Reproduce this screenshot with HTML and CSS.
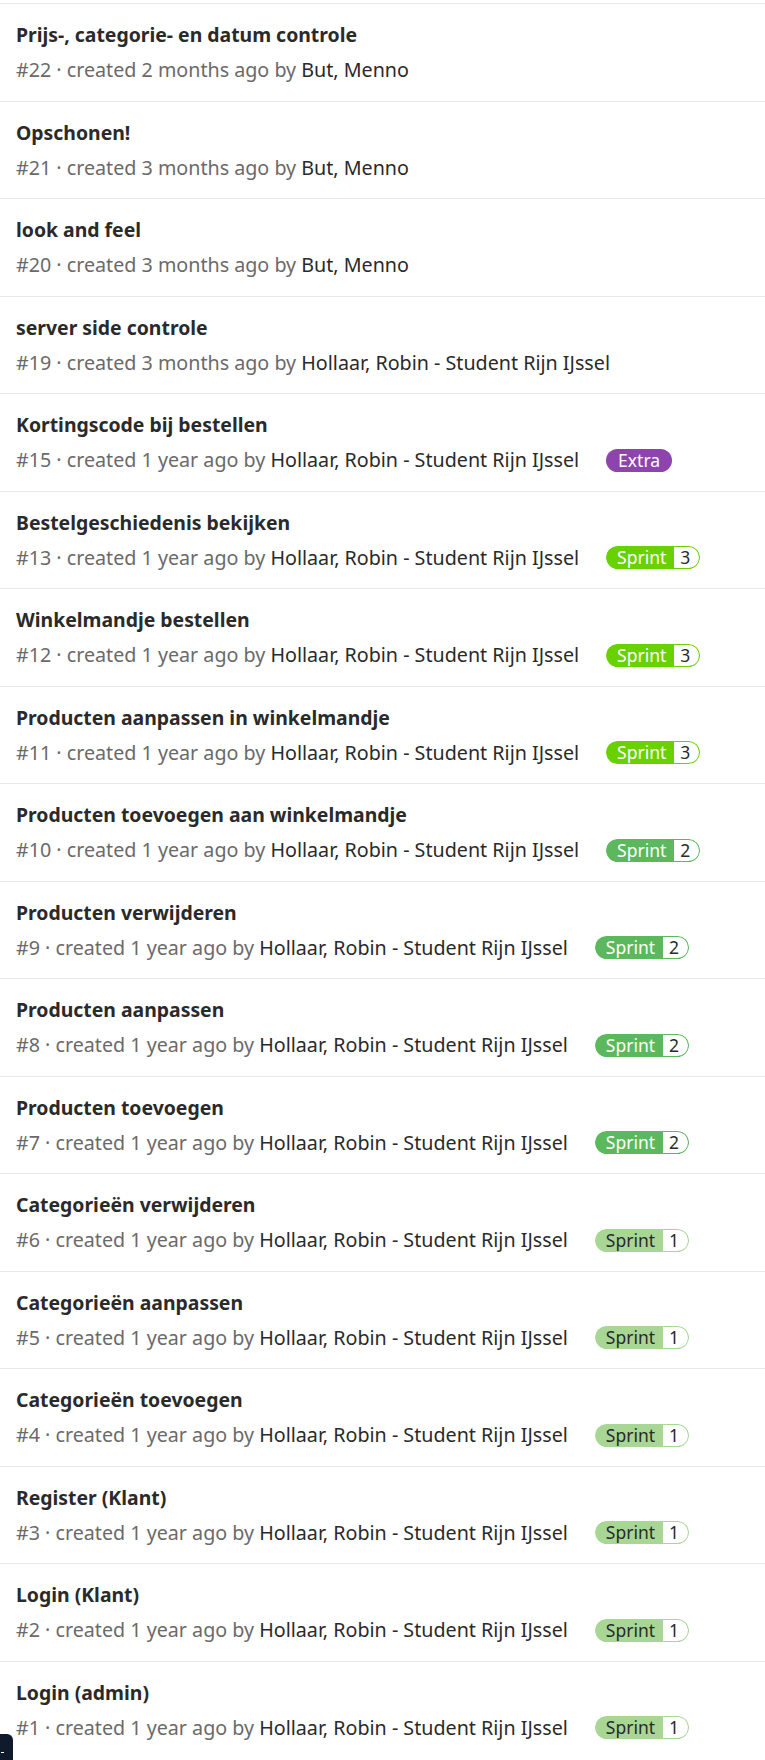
FILE: index.html
```html
<!DOCTYPE html>
<html lang="nl">
<head>
<meta charset="utf-8">
<title>Issues</title>
<link rel="stylesheet" href="styles.css">
</head>
<body>
<ul class="issues">
  <li class="issue"><div class="title">Prijs-, categorie- en datum controle</div><div class="meta"><span class="info">#22 · created 2 months ago by <span class="author">But, Menno</span></span></div></li>
  <li class="issue"><div class="title">Opschonen!</div><div class="meta"><span class="info">#21 · created 3 months ago by <span class="author">But, Menno</span></span></div></li>
  <li class="issue"><div class="title">look and feel</div><div class="meta"><span class="info">#20 · created 3 months ago by <span class="author">But, Menno</span></span></div></li>
  <li class="issue"><div class="title">server side controle</div><div class="meta"><span class="info">#19 · created 3 months ago by <span class="author">Hollaar, Robin - Student Rijn IJssel</span></span></div></li>
  <li class="issue"><div class="title">Kortingscode bij bestellen</div><div class="meta"><span class="info">#15 · created 1 year ago by <span class="author">Hollaar, Robin - Student Rijn IJssel</span></span><span class="label label-extra">Extra</span></div></li>
  <li class="issue"><div class="title">Bestelgeschiedenis bekijken</div><div class="meta"><span class="info">#13 · created 1 year ago by <span class="author">Hollaar, Robin - Student Rijn IJssel</span></span><span class="scoped s3"><span class="key">Sprint</span><span class="val">3</span></span></div></li>
  <li class="issue"><div class="title">Winkelmandje bestellen</div><div class="meta"><span class="info">#12 · created 1 year ago by <span class="author">Hollaar, Robin - Student Rijn IJssel</span></span><span class="scoped s3"><span class="key">Sprint</span><span class="val">3</span></span></div></li>
  <li class="issue"><div class="title">Producten aanpassen in winkelmandje</div><div class="meta"><span class="info">#11 · created 1 year ago by <span class="author">Hollaar, Robin - Student Rijn IJssel</span></span><span class="scoped s3"><span class="key">Sprint</span><span class="val">3</span></span></div></li>
  <li class="issue"><div class="title">Producten toevoegen aan winkelmandje</div><div class="meta"><span class="info">#10 · created 1 year ago by <span class="author">Hollaar, Robin - Student Rijn IJssel</span></span><span class="scoped s2"><span class="key">Sprint</span><span class="val">2</span></span></div></li>
  <li class="issue"><div class="title">Producten verwijderen</div><div class="meta"><span class="info">#9 · created 1 year ago by <span class="author">Hollaar, Robin - Student Rijn IJssel</span></span><span class="scoped s2"><span class="key">Sprint</span><span class="val">2</span></span></div></li>
  <li class="issue"><div class="title">Producten aanpassen</div><div class="meta"><span class="info">#8 · created 1 year ago by <span class="author">Hollaar, Robin - Student Rijn IJssel</span></span><span class="scoped s2"><span class="key">Sprint</span><span class="val">2</span></span></div></li>
  <li class="issue"><div class="title">Producten toevoegen</div><div class="meta"><span class="info">#7 · created 1 year ago by <span class="author">Hollaar, Robin - Student Rijn IJssel</span></span><span class="scoped s2"><span class="key">Sprint</span><span class="val">2</span></span></div></li>
  <li class="issue"><div class="title">Categorieën verwijderen</div><div class="meta"><span class="info">#6 · created 1 year ago by <span class="author">Hollaar, Robin - Student Rijn IJssel</span></span><span class="scoped s1"><span class="key">Sprint</span><span class="val">1</span></span></div></li>
  <li class="issue"><div class="title">Categorieën aanpassen</div><div class="meta"><span class="info">#5 · created 1 year ago by <span class="author">Hollaar, Robin - Student Rijn IJssel</span></span><span class="scoped s1"><span class="key">Sprint</span><span class="val">1</span></span></div></li>
  <li class="issue"><div class="title">Categorieën toevoegen</div><div class="meta"><span class="info">#4 · created 1 year ago by <span class="author">Hollaar, Robin - Student Rijn IJssel</span></span><span class="scoped s1"><span class="key">Sprint</span><span class="val">1</span></span></div></li>
  <li class="issue"><div class="title">Register (Klant)</div><div class="meta"><span class="info">#3 · created 1 year ago by <span class="author">Hollaar, Robin - Student Rijn IJssel</span></span><span class="scoped s1"><span class="key">Sprint</span><span class="val">1</span></span></div></li>
  <li class="issue"><div class="title">Login (Klant)</div><div class="meta"><span class="info">#2 · created 1 year ago by <span class="author">Hollaar, Robin - Student Rijn IJssel</span></span><span class="scoped s1"><span class="key">Sprint</span><span class="val">1</span></span></div></li>
  <li class="issue"><div class="title">Login (admin)</div><div class="meta"><span class="info">#1 · created 1 year ago by <span class="author">Hollaar, Robin - Student Rijn IJssel</span></span><span class="scoped s1"><span class="key">Sprint</span><span class="val">1</span></span></div></li>
</ul>
<div class="corner-btn"><span class="corner-mark"></span></div>
</body>
</html>
```
FILE: styles.css
```css
html, body {
  margin: 0;
  padding: 0;
  background: #ffffff;
}
body {
  font-family: "Noto Sans", "DejaVu Sans", sans-serif;
  color: #303030;
  overflow: hidden;
}
.issues {
  list-style: none;
  margin: 0;
  padding: 3px 0 0;
}
.issue {
  border-top: 1px solid #e9e9e9;
  padding: 19px 16px 18.5px;
  display: flex;
  flex-direction: column;
  gap: 11px;
}
.title {
  font-size: 19.4px;
  font-weight: 700;
  line-height: 24px;
  color: #2a2a2a;
  white-space: nowrap;
}
.meta {
  display: flex;
  align-items: center;
  gap: 27px;
  height: 24px;
  white-space: nowrap;
}
.info {
  font-size: 19.7px;
  line-height: 24px;
  color: #6a6a6a;
}
.author {
  color: #2a2a2a;
}
.label {
  display: inline-flex;
  align-items: center;
  height: 23px;
  padding: 0 12px;
  border-radius: 12px;
  font-size: 17.5px;
  line-height: 23px;
}
.label-extra {
  background: #8e44ad;
  color: #ffffff;
}
.scoped {
  display: inline-flex;
  height: 23px;
  font-size: 17.5px;
  line-height: 21px;
  border-radius: 12px;
  overflow: hidden;
}
.scoped .key {
  padding: 1px 8px 1px 11px;
  border-radius: 12px 0 0 12px;
}
.scoped .val {
  padding: 0 9px 0 6px;
  background: #ffffff;
  color: #2a2a2a;
  border-width: 1px 1px 1px 0;
  border-style: solid;
  border-radius: 0 12px 12px 0;
}
.s3 .key { background: #69d100; color: #ffffff; }
.s3 .val { border-color: #69d100; }
.s2 .key { background: #5cb85c; color: #ffffff; }
.s2 .val { border-color: #5cb85c; }
.s1 .key { background: #a8d695; color: #2a2a2a; }
.s1 .val { border-color: #a8d695; }
.corner-btn {
  position: fixed;
  left: 0;
  top: 1734px;
  width: 13px;
  height: 30px;
  background: #0f1b2d;
  border-radius: 0 6px 0 0;
}
.corner-mark {
  position: absolute;
  left: 1px;
  top: 18px;
  width: 3px;
  height: 1px;
  background: #ffffff;
}
```
